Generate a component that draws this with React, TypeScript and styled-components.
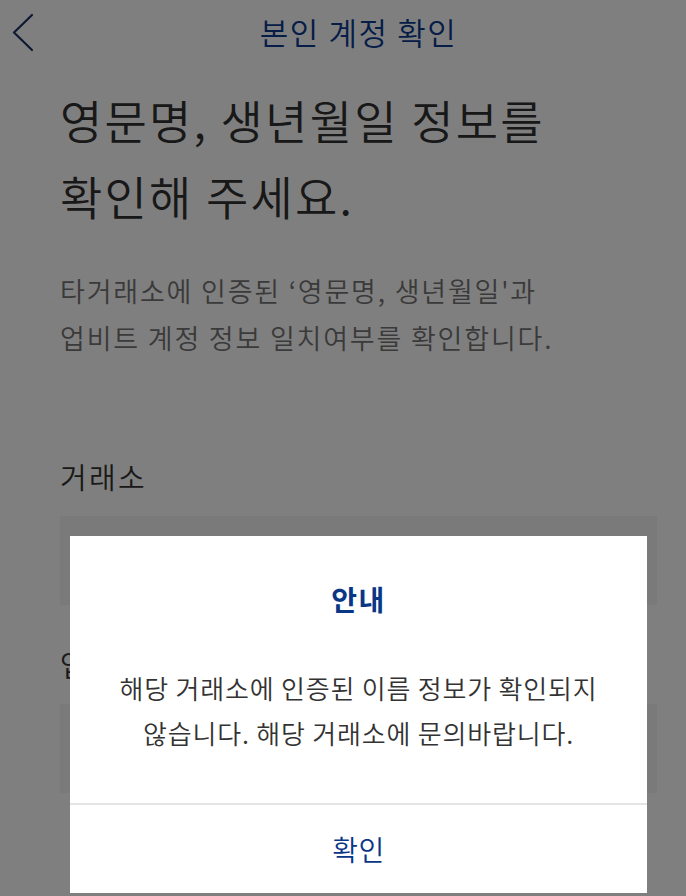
import React from "react";
import styled, { createGlobalStyle } from "styled-components";

const GlobalStyle = createGlobalStyle`
  html, body {
    margin: 0;
    padding: 0;
    background: #ffffff;
    overflow: hidden;
  }
  * {
    box-sizing: border-box;
  }
`;

const FONT = `"Noto Sans CJK KR", "Noto Sans", sans-serif`;

const Screen = styled.div`
  position: relative;
  width: 717px;
  height: 896px;
  overflow: hidden;
  background: #ffffff;
  font-family: ${FONT};
`;

const Header = styled.header`
  position: relative;
  display: flex;
  align-items: center;
  justify-content: center;
  height: 66px;
`;

const BackButton = styled.button`
  position: absolute;
  left: 8px;
  top: 10px;
  display: flex;
  align-items: center;
  justify-content: center;
  width: 30px;
  height: 44px;
  padding: 0;
  border: none;
  background: none;
`;

const HeaderTitle = styled.h1`
  margin: 0 0 3px;
  font-size: 31px;
  font-weight: 350;
  line-height: 40px;
  color: #0b3a8f;
  letter-spacing: 1.6px;
`;

const Content = styled.main`
  padding: 15px 60px 0;
`;

const Heading = styled.h2`
  margin: 0;
  font-size: 46px;
  font-weight: 350;
  line-height: 76px;
  color: #303030;
  letter-spacing: 2.2px;
`;

const Description = styled.p`
  margin: 34px 0 0;
  font-size: 27px;
  font-weight: 350;
  line-height: 47px;
  color: #747474;
  letter-spacing: 1.8px;
`;

const Field = styled.div<{ $top: number }>`
  margin-top: ${(p) => p.$top}px;
`;

const Label = styled.div`
  height: 40px;
  font-size: 29px;
  font-weight: 350;
  line-height: 40px;
  color: #333333;
  letter-spacing: 2.3px;
`;

const InputBox = styled.div`
  margin-top: 20px;
  height: 89px;
  background: #f5f5f5;
`;

const Dim = styled.div`
  position: absolute;
  inset: 0;
  display: flex;
  flex-direction: column;
  align-items: center;
  justify-content: flex-end;
  padding-bottom: 3px;
  background: rgba(0, 0, 0, 0.5);
`;

const Dialog = styled.div`
  display: flex;
  flex-direction: column;
  width: 577px;
  background: #ffffff;
`;

const DialogBody = styled.div`
  display: flex;
  flex-direction: column;
  align-items: center;
  padding: 45px 20px 48px;
  border-bottom: 2px solid #e4e4e4;
`;

const DialogTitle = styled.div`
  font-size: 28px;
  font-weight: 700;
  line-height: 36px;
  color: #093687;
  letter-spacing: 1.5px;
`;

const DialogText = styled.p`
  margin: 48px 0 0;
  font-size: 26px;
  font-weight: 350;
  line-height: 45px;
  text-align: center;
  color: #333333;
  letter-spacing: 0.8px;
`;

const DialogButton = styled.button`
  height: 88px;
  padding: 0;
  border: none;
  background: #ffffff;
  font-family: ${FONT};
  font-size: 28px;
  font-weight: 350;
  color: #093687;
  letter-spacing: 0.5px;
`;

const ChevronLeft = () => (
  <svg width="24" height="40" viewBox="0 0 24 40" fill="none">
    <path
      d="M21 3 L3 20.5 L21 38"
      stroke="#1c3266"
      strokeWidth="2.2"
      strokeLinecap="round"
      strokeLinejoin="round"
    />
  </svg>
);

export default function App() {
  return (
    <>
      <GlobalStyle />
      <Screen>
        <Header>
          <BackButton aria-label="뒤로">
            <ChevronLeft />
          </BackButton>
          <HeaderTitle>본인 계정 확인</HeaderTitle>
        </Header>
        <Content>
          <Heading>
            영문명, 생년월일 정보를
            <br />
            확인해 주세요.
          </Heading>
          <Description>
            타거래소에 인증된 ‘영문명, 생년월일'과
            <br />
            업비트 계정 정보 일치여부를 확인합니다.
          </Description>
          <Field $top={95}>
            <Label>거래소</Label>
            <InputBox />
          </Field>
          <Field $top={39}>
            <Label>업비트 계정 영문명</Label>
            <InputBox />
          </Field>
        </Content>
        <Dim>
          <Dialog role="dialog">
            <DialogBody>
              <DialogTitle>안내</DialogTitle>
              <DialogText>
                해당 거래소에 인증된 이름 정보가 확인되지
                <br />
                않습니다. 해당 거래소에 문의바랍니다.
              </DialogText>
            </DialogBody>
            <DialogButton>확인</DialogButton>
          </Dialog>
        </Dim>
      </Screen>
    </>
  );
}
